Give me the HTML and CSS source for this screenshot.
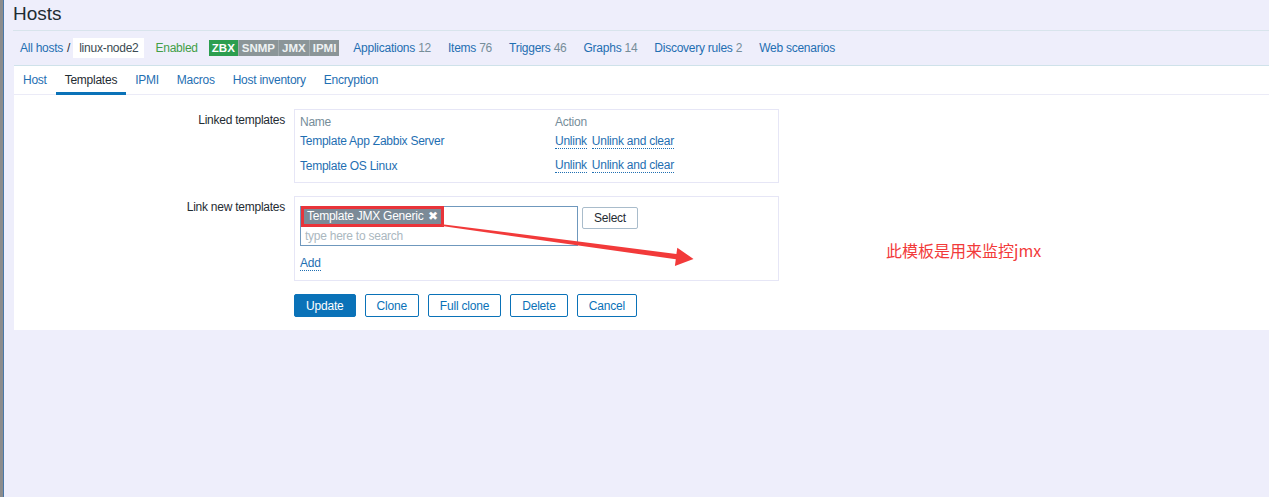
FILE: index.html
```html
<!DOCTYPE html>
<html lang="en">
<head>
<meta charset="utf-8">
<title>Hosts</title>
<link rel="stylesheet" href="styles.css">
</head>
<body>
<div class="frame">
  <div class="edge"></div>
  <main class="page">
    <h1 class="title">Hosts</h1>
    <nav class="hostnav">
      <a class="crumb link" href="#">All hosts</a>
      <span class="sep">/</span>
      <span class="hostname">linux-node2</span>
      <span class="status">Enabled</span>
      <span class="tags">
        <span class="tag tag-on">ZBX</span><span class="tag">SNMP</span><span class="tag">JMX</span><span class="tag">IPMI</span>
      </span>
      <a class="navlink" href="#">Applications <span class="count">12</span></a>
      <a class="navlink" href="#">Items <span class="count">76</span></a>
      <a class="navlink" href="#">Triggers <span class="count">46</span></a>
      <a class="navlink" href="#">Graphs <span class="count">14</span></a>
      <a class="navlink" href="#">Discovery rules <span class="count">2</span></a>
      <a class="navlink" href="#">Web scenarios</a>
    </nav>
    <section class="panel">
      <ul class="tabs">
        <li class="tab">Host</li>
        <li class="tab active">Templates</li>
        <li class="tab">IPMI</li>
        <li class="tab">Macros</li>
        <li class="tab">Host inventory</li>
        <li class="tab">Encryption</li>
      </ul>
      <form class="form">
        <div class="label">Linked templates</div>
        <div class="box linked">
          <div class="trow thead"><span class="cname">Name</span><span>Action</span></div>
          <div class="trow"><a class="cname link" href="#">Template App Zabbix Server</a><span class="actions"><a class="dlink" href="#">Unlink</a><a class="dlink" href="#">Unlink and clear</a></span></div>
          <div class="trow tall"><a class="cname link" href="#">Template OS Linux</a><span class="actions"><a class="dlink" href="#">Unlink</a><a class="dlink" href="#">Unlink and clear</a></span></div>
        </div>

        <div class="label">Link new templates</div>
        <div class="box linknew">
          <div class="msrow">
            <div class="ms">
              <div class="chips"><span class="chip">Template JMX Generic <span class="chip-x">&#10006;</span></span></div>
              <div class="ms-input">type here to search</div>
            </div>
            <button type="button" class="btn-select">Select</button>
          </div>
          <a class="dlink add" href="#">Add</a>
        </div>

        <div class="label"></div>
        <div class="buttons">
          <button type="button" class="btn primary">Update</button>
          <button type="button" class="btn">Clone</button>
          <button type="button" class="btn">Full clone</button>
          <button type="button" class="btn">Delete</button>
          <button type="button" class="btn">Cancel</button>
        </div>
      </form>
    </section>
  </main>
</div>

<svg class="arrow" width="1269" height="497" viewBox="0 0 1269 497" aria-hidden="true">
  <polygon points="442,224.2 676.4,254.1 677.3,247.7 693.5,259 674.9,266 675.8,259.3 442,226" fill="#f23a3a"/>
</svg>
<div class="note">此模板是用来监控jmx</div>
</body>
</html>
```

FILE: styles.css
```css
* { box-sizing: border-box; }

html, body {
  margin: 0;
  padding: 0;
  height: 100%;
}

body {
  background: #eeeefb;
  font-family: "Liberation Sans", Arial, sans-serif;
  font-size: 12px;
  color: #1f2c33;
  position: relative;
  overflow: hidden;
}

a { text-decoration: none; }

.frame {
  display: flex;
  min-height: 497px;
}

.edge {
  width: 4px;
  flex: none;
  background: #8c8c8c;
  border-right: 1px solid #4a78a8;
}

.page {
  flex: 1;
  padding-left: 10px;
  letter-spacing: -0.25px;
}

.title {
  margin: 0;
  height: 31px;
  line-height: 28px;
  font-size: 19px;
  font-weight: normal;
  letter-spacing: 0;
  color: #1f2c33;
  border-bottom: 1px solid #d8e4ec;
  margin-left: -1px;
}

.hostnav {
  height: 35px;
  display: flex;
  align-items: center;
  padding-left: 6px;
  border-bottom: 1px solid #cfe2ea;
  white-space: nowrap;
}

.link, .navlink { color: #1f6fb2; }

.sep {
  margin: 0 3px 0 4px;
  color: #1f2c33;
}

.hostname {
  background: #ffffff;
  height: 20px;
  line-height: 20px;
  padding: 0 5px 0 6px;
  color: #3b4a52;
}

.status {
  color: #429e47;
  margin-left: 12px;
}

.tags {
  display: flex;
  margin-left: 11px;
  height: 16px;
}

.tag {
  background: #8b9598;
  color: #eef2f3;
  font-weight: bold;
  font-size: 11.5px;
  letter-spacing: 0;
  line-height: 16px;
  padding: 0 3px;
  border-left: 1px solid #a2aaad;
}

.tag-on {
  background: #2c9e4f;
  color: #ffffff;
  border-left: none;
}

.navlink { margin-left: 14px; }
.navlink + .navlink { margin-left: 17px; }

.count { color: #768d99; }

.panel {
  background: #ffffff;
  padding-bottom: 13px;
}

.tabs {
  list-style: none;
  margin: 0;
  padding: 0;
  display: flex;
  height: 29px;
  border-bottom: 1px solid #ebebf7;
}

.tab {
  height: 28px;
  line-height: 28px;
  padding: 0 9px;
  color: #1f6fb2;
}

.tab.active {
  color: #1f2c33;
  border-bottom: 3px solid #0a72b8;
  height: 29px;
}

.form {
  display: grid;
  grid-template-columns: 271px 485px;
  column-gap: 9px;
  row-gap: 13px;
  padding-top: 14px;
}

.label {
  text-align: right;
  padding-top: 4px;
  line-height: 14px;
  color: #1f2c33;
}

.box {
  border: 1px solid #e6e6f6;
}

.linked {
  padding: 5px 5px 4px;
}

.trow {
  display: flex;
  align-items: center;
  height: 24px;
}

.trow.tall { height: 25px; }

.thead {
  height: 14px;
  line-height: 14px;
  color: #768d99;
}

.cname {
  width: 255px;
  flex: none;
}

.actions {
  display: flex;
  gap: 5px;
}

.dlink {
  color: #1f6fb2;
  border-bottom: 1px dotted #1f6fb2;
  line-height: 14px;
}

.linknew {
  padding: 9px 5px 9px;
}

.msrow {
  display: flex;
  align-items: flex-start;
  gap: 4px;
}

.ms {
  width: 278px;
  height: 40px;
  border: 1px solid #6f98bd;
}

.chips {
  height: 20px;
  padding: 2px 0 0 3px;
}

.chip {
  display: inline-block;
  height: 15px;
  line-height: 15px;
  background: #7b8a97;
  color: #ffffff;
  padding: 0 3px 0 3px;
  outline: 3px solid #e8343a;
  white-space: nowrap;
}

.chip-x {
  font-size: 11.5px;
  margin-left: 2px;
}

.ms-input {
  height: 18px;
  line-height: 18px;
  padding-left: 4px;
  color: #abb8bf;
}

.btn-select {
  margin-top: 1px;
  height: 22px;
  width: 56px;
  padding: 0;
  background: #ffffff;
  border: 1px solid #a9bccb;
  border-radius: 2px;
  color: #1f2c33;
  font-family: "Liberation Sans", Arial, sans-serif;
  font-size: 12px;
  letter-spacing: -0.25px;
}

.add {
  display: inline-block;
  margin-top: 10px;
}

.buttons {
  display: flex;
  gap: 9px;
}

.btn {
  height: 23px;
  padding: 0 11px;
  background: #ffffff;
  border: 1px solid #0a72b8;
  border-radius: 2px;
  color: #0a72b8;
  font-family: "Liberation Sans", Arial, sans-serif;
  font-size: 12px;
  letter-spacing: -0.2px;
}

.btn.primary {
  background: #0a72b8;
  color: #ffffff;
}

.arrow {
  position: absolute;
  left: 0;
  top: 0;
  pointer-events: none;
}

.note {
  position: absolute;
  left: 886px;
  top: 240px;
  font-family: "Noto Sans CJK SC", "Liberation Sans", sans-serif;
  font-size: 16px;
  line-height: 20px;
  color: #f23a3a;
}
```
